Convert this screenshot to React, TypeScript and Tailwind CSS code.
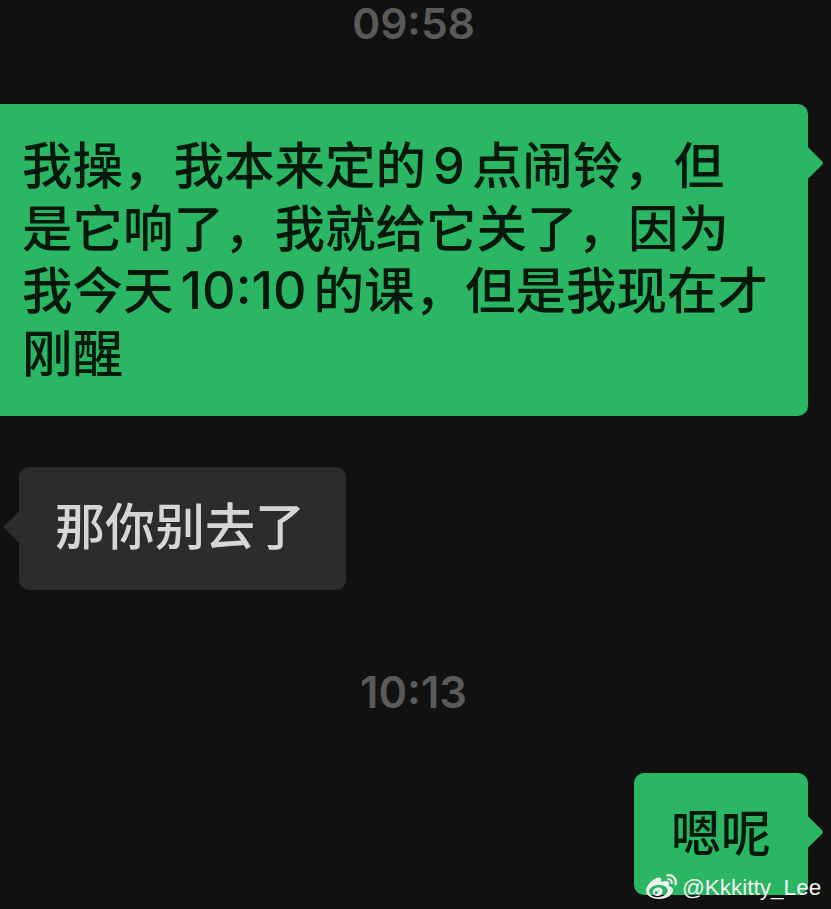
import { FaWeibo } from "react-icons/fa";

const font = { fontFamily: '"Inter", "Noto Sans CJK SC", sans-serif' };

function Tail({ side }: { side: "left" | "right" }) {
  return (
    <div
      className={
        side === "right"
          ? "absolute right-[-11px] top-[47px] size-[24px] rotate-45 rounded-[3px] bg-[#2ab662]"
          : "absolute left-[-11px] top-[48px] size-[24px] rotate-45 rounded-[3px] bg-[#2c2c2c]"
      }
    />
  );
}

export default function App() {
  return (
    <div
      className="relative flex h-[909px] w-[831px] flex-col overflow-hidden bg-[#111111]"
      style={font}
    >
      <div className="h-[46px] pr-[4px] pt-[1px] text-center text-[42.5px] font-semibold leading-[46px] text-[#5a5a5a]">09:58</div>

      <div className="relative ml-[-20px] mt-[58px] w-[828px] rounded-r-[10px] bg-[#2ab662] py-[31px] pl-[42px] pr-[30px] text-[50.5px] font-medium leading-[62.6px] text-[#04190b]">
        <Tail side="right" />
        <div className="relative whitespace-nowrap">我操，我本来定的<span className="mx-[7px]">9</span>点闹铃，但</div>
        <div className="relative whitespace-nowrap">是它响了，我就给它关了，因为</div>
        <div className="relative whitespace-nowrap">我今天<span className="mx-[7px] text-[52px]">10:10</span>的课，但是我现在才</div>
        <div className="relative whitespace-nowrap">刚醒</div>
      </div>

      <div className="relative ml-[19px] mt-[51px] h-[123px] w-[327px] rounded-[10px] bg-[#2c2c2c] px-[36px] text-[50px] font-medium leading-[121px] text-[#d6d6d6]">
        <Tail side="left" />
        <span className="relative whitespace-nowrap">那你别去了</span>
      </div>

      <div className="mt-[79px] h-[46px] pr-[4px] text-center text-[43.5px] font-semibold leading-[46px] text-[#5a5a5a]">10:13</div>

      <div className="relative ml-[634px] mt-[58px] h-[122px] w-[174px] rounded-[10px] bg-[#2ab662] pl-[37px] text-[50px] font-medium leading-[122px] text-[#04190b]">
        <Tail side="right" />
        <span className="relative whitespace-nowrap">嗯呢</span>
      </div>

      <div className="absolute left-[646px] top-[872px] flex items-center gap-[5px] text-[#f2f2f2]">
        <FaWeibo className="size-[31px]" />
        <span className="whitespace-nowrap text-[22.5px] leading-[30px] [font-family:'Liberation_Sans',sans-serif]">@Kkkitty_Lee</span>
      </div>
    </div>
  );
}
